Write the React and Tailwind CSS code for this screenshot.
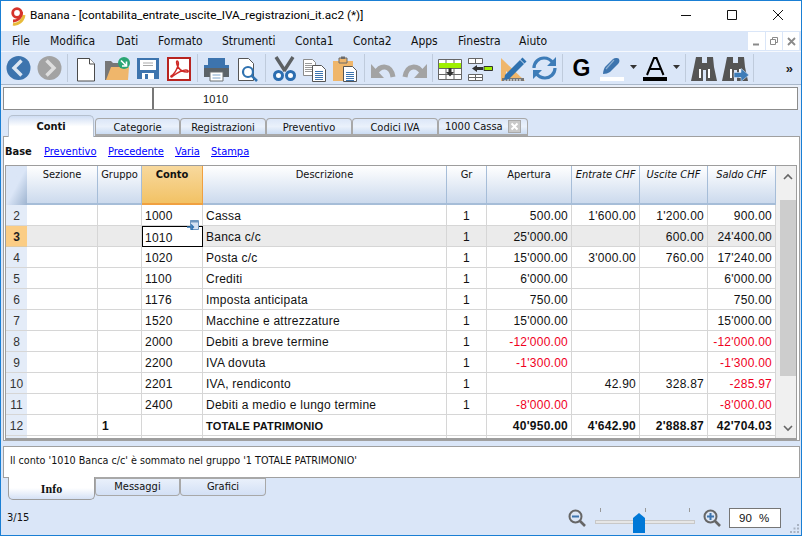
import React from "react";

const ui = "font-['Liberation_Sans',sans-serif]";
const tahoma = "font-['DejaVu_Sans_Condensed','Roboto',sans-serif]";

const Svg = ({ w = 31, h = 28, children }) => (
  <svg width={w} height={h} viewBox={`0 0 ${w} ${h}`} className="block shrink-0">{children}</svg>
);

const Back = () => (
  <Svg><circle cx="15.5" cy="14" r="12" fill="#3d74ae" /><path d="M18.5 6.5 11 14l7.5 7.5" fill="none" stroke="#dce6f2" strokeWidth="3.4" /></Svg>
);
const Fwd = () => (
  <Svg><circle cx="15.5" cy="14" r="12" fill="#a3a3a3" /><path d="M12.5 6.5 20 14l-7.5 7.5" fill="none" stroke="#dedede" strokeWidth="3.4" /></Svg>
);
const NewDoc = () => (
  <Svg><path d="M6.5 4.5h12l5 5.5v17h-17z" fill="#fff" stroke="#4a4a4a" /><path d="M18.5 4.5v5.5h5" fill="#fff" stroke="#4a4a4a" /></Svg>
);
const Open = () => (
  <Svg>
    <path d="M3 26V7h6l2 2h9v6H10L6 26z" fill="#777" />
    <path d="M4 26 9 13h18l-1 13z" fill="#efb66b" />
    <circle cx="22" cy="9" r="6" fill="#2ba574" />
    <path d="M19 6.5 24 11.5M24.5 7.5v4.5h-4.5" stroke="#fff" strokeWidth="1.6" fill="none" />
  </Svg>
);
const Save = () => (
  <Svg>
    <path d="M4 4h22v21H4z" fill="#3d74ae" />
    <path d="M7 6h16v10H7z" fill="#fff" />
    <path d="M10 9h10M10 11.5h10" stroke="#a9a9a9" />
    <path d="M9 19h12v6H9z" fill="#fff" /><path d="M12 20h3v5h-3z" fill="#3d74ae" />
  </Svg>
);
const Pdf = () => (
  <Svg>
    <path d="M4 4h22v22H4z" fill="#fff" stroke="#b82420" strokeWidth="2" />
    <path d="M7 22c3-1 5-5 7-10 1-3 0-5-.8-5-1 0-.8 3 .8 6 2 3 5 5 9 5 2 0 1.600-2-1-2-4 0-9 3-13 6-1.500 1.500-2.500 1-2 0z" fill="none" stroke="#cf2a27" strokeWidth="1.500" />
  </Svg>
);
const PrintI = () => (
  <Svg>
    <path d="M7 4h17v7H7z" fill="#3d74ae" />
    <path d="M3 11h25v12H3z" fill="#5c6368" />
    <path d="M3 11h25v3H3z" fill="#3d74ae" />
    <path d="M9 18h13v9H9z" fill="#fff" stroke="#6b7073" />
    <path d="M11.500 21h8M11.500 24h8" stroke="#7ca4cc" />
  </Svg>
);
const Preview = () => (
  <Svg>
    <path d="M6.500 4.500h10l5 5v17h-15z" fill="#fff" stroke="#555" />
    <circle cx="16" cy="18" r="5" fill="#fff" stroke="#2f72b0" strokeWidth="2.200" />
    <path d="m19.500 21.500 5.500 5.500" stroke="#2f72b0" strokeWidth="2.600" />
  </Svg>
);
const Scissors = () => (
  <Svg>
    <path d="M7 3 16 17M24 3 15 17" stroke="#5d6164" strokeWidth="3.400" />
    <circle cx="9.500" cy="21.500" r="4" fill="#fff" stroke="#2b6db0" strokeWidth="3" />
    <circle cx="21.500" cy="21.500" r="4" fill="#fff" stroke="#2b6db0" strokeWidth="3" />
  </Svg>
);
const Lines = ({ x, y, w, n, c = "#3d74ae", gap = 2 }) => (
  <path d={Array.from({ length: n }, (_, i) => `M${x} ${y + i * gap + 0.5}h${w}`).join("")} stroke={c} />
);
const Copy = () => (
  <Svg>
    <path d="M3.500 5.500h9l3 3v13h-12z" fill="#fff" stroke="#8b8b8b" />
    <Lines x={5} y={9} w={7} n={5} c="#9a9a9a" />
    <path d="M12.500 11.500h9l4 4v12h-13z" fill="#fff" stroke="#555" />
    <Lines x={15} y={17} w={8} n={5} />
  </Svg>
);
const Paste = () => (
  <Svg>
    <path d="M2 7h20v20H2z" fill="#efb66b" />
    <path d="M8 4h8v5H8z" fill="#efb66b" stroke="#6b6b6b" />
    <path d="M10 2.500h4V5h-4z" fill="#6b6b6b" />
    <path d="M12.500 12.500h9l4 4v11h-13z" fill="#fff" stroke="#555" />
    <Lines x={15} y={18} w={8} n={5} />
  </Svg>
);
const UndoShape = () => (
  <>
    <path d="M8 19C12 11 23 10 25 23" fill="none" stroke="#a3a3a3" strokeWidth="5" />
    <path d="M3 10v14h13z" fill="#a3a3a3" />
  </>
);
const Undo = () => <Svg><UndoShape /></Svg>;
const Redo = () => (
  <Svg><g transform="matrix(-1 0 0 1 31 0)"><UndoShape /></g></Svg>
);
const InsRow = () => (
  <Svg>
    <path d="M2.500 5.500h23v20h-23z" fill="#fff" stroke="#666" />
    <path d="M3 9h22v5H3z" fill="#9fef00" />
    <path d="M3 14.500h22M3 20.500h22M10 14v11M18 14v11M10 6v3M18 6v3" stroke="#666" />
    <path d="M12.500 14h3v4h2.500L14 22.500 10 18h2.500z" fill="#333" />
  </Svg>
);
const DelCol = () => (
  <Svg>
    <path d="M1.500 4.500h14v5h-14zM1.500 9.500h14M8.500 4.500v5M1.500 20.500h14v6h-14zM8.500 20.500v6M1.500 23.500h14" fill="#fff" stroke="#666" />
    <path d="M17 12.500h8.500v4H17z" fill="#9fef00" stroke="#333" />
    <path d="M5 14.500 10 11v2h6v3h-6v2z" fill="#333" />
  </Svg>
);
const Ruler = () => (
  <Svg>
    <path d="M3 4v23h24z" fill="#efb66b" />
    <path d="M8 17v5h5z" fill="#dce6f7" />
    <path d="M4 24h22v3H4z" fill="#777" />
    <path d="M7 25v2M10 25v2M13 25v2M16 25v2M19 25v2M22 25v2" stroke="#fff" />
    <path d="m7 21 15-15 4 4-15 15-5 1z" fill="#2f72b0" />
    <path d="m22.500 5.500 2-2 4 4-2 2z" fill="#2f72b0" />
  </Svg>
);
const Refresh = () => (
  <Svg>
    <path d="M5 14c0-6 5-10 10-10 4 0 7 2 9 5M26 14c0 6-5 10-10 10-4 0-7-2-9-5" fill="none" stroke="#3d7cb8" strokeWidth="3.200" />
    <path d="M27 3v9h-9zM4 25v-9h9z" fill="#3d7cb8" />
  </Svg>
);
const Highlighter = () => (
  <Svg>
    <path d="M6 20c0-3 1-5 2-7l8-8c2-1.500 5-1 6 0 1 2 0 4-1 5l-8 8c-2 1-4 2-7 2z" fill="#3d74ae" />
    <path d="M17 6l-8 9" stroke="#8fb0d2" strokeWidth="1.200" />
    <path d="M3 23h24v4H3z" fill="#fff" />
  </Svg>
);
const FontA = () => (
  <Svg>
    <path d="M7 21 14 4h2.500l7 17M9.500 15h11.500" fill="none" stroke="#000" strokeWidth="2" />
    <path d="M3 23h24v4H3z" fill="#000" />
  </Svg>
);
const Binoc = ({ arrow }) => (
  <Svg>
    <path d="M7 3h6v6h5V3h6l1 10 3 14H17V16h-3v11H2l3-14z" fill="#555" />
    <path d="M10 15h2v9h-2zM19 15h2v9h-2z" fill="#fff" />
    {arrow && <path d="M14 18.500h7v-4l8 6.500-8 6.500v-4h-7z" fill="#3d7cb8" stroke="#dae6f8" strokeWidth=".6" />}
  </Svg>
);
const Caret = () => (
  <Svg w={12} h={28}><path d="M2 11h7l-3.500 4z" fill="#333" /></Svg>
);
const Sep = () => <div className="w-px h-[28px] bg-[#bfcbdc] ml-[2px] mr-[3px] shrink-0" />;

const Logo = () => (
  <svg width="18" height="20" viewBox="0 0 18 20" className="block shrink-0">
    <path d="M4 18c5 1 10-3 11-9" fill="none" stroke="#e8bb3a" strokeWidth="3" />
    <circle cx="8" cy="7" r="4.300" fill="none" stroke="#d6322a" strokeWidth="2.800" />
    <path d="M12.500 6C13 11 9 15 4 15" fill="none" stroke="#d6322a" strokeWidth="2.800" />
  </svg>
);

const Magnifier = ({ plus }) => (
  <svg width="18" height="19" viewBox="0 0 18 19" className="block shrink-0">
    <circle cx="7.500" cy="7.500" r="6" fill="#dce6f5" stroke="#666" strokeWidth="2" />
    <path d="m12 12 5 5" stroke="#666" strokeWidth="2.600" />
    <path d={plus ? "M4 7.500h7M7.500 4v7" : "M4 7.500h7"} stroke="#3d74ae" strokeWidth="2" />
  </svg>
);

const menu = [
  ["File", "w-[38px]"], ["Modifica", "w-[66px]"], ["Dati", "w-[42px]"], ["Formato", "w-[64px]"], ["Strumenti", "w-[73px]"],
  ["Conta1", "w-[58px]"], ["Conta2", "w-[58px]"], ["Apps", "w-[47px]"], ["Finestra", "w-[61px]"], ["Aiuto", "w-[40px]"],
];

const topTabs = [
  ["Categorie", "w-[85px]"], ["Registrazioni", "w-[86px]"], ["Preventivo", "w-[86px]"], ["Codici IVA", "w-[86px]"],
];

const cols = [
  { w: "w-[21px]" },
  { w: "w-[71px]", t: "Sezione" },
  { w: "w-[44px]", t: "Gruppo" },
  { w: "w-[61px]", t: "Conto" },
  { w: "w-[244px]", t: "Descrizione" },
  { w: "w-[40px]", t: "Gr" },
  { w: "w-[85px]", t: "Apertura" },
  { w: "w-[68px]", t: "Entrate CHF", i: true },
  { w: "w-[68px]", t: "Uscite CHF", i: true },
  { w: "w-[68px]", t: "Saldo CHF", i: true },
];

const rows = [
  ["2", "", "", "1000", "Cassa", "1", "500.00", "1'600.00", "1'200.00", "900.00"],
  ["3", "", "", "1010", "Banca c/c", "1", "25'000.00", "", "600.00", "24'400.00"],
  ["4", "", "", "1020", "Posta c/c", "1", "15'000.00", "3'000.00", "760.00", "17'240.00"],
  ["5", "", "", "1100", "Crediti", "1", "6'000.00", "", "", "6'000.00"],
  ["6", "", "", "1176", "Imposta anticipata", "1", "750.00", "", "", "750.00"],
  ["7", "", "", "1520", "Macchine e attrezzature", "1", "15'000.00", "", "", "15'000.00"],
  ["8", "", "", "2000", "Debiti a breve termine", "1", "-12'000.00", "", "", "-12'000.00"],
  ["9", "", "", "2200", "IVA dovuta", "1", "-1'300.00", "", "", "-1'300.00"],
  ["10", "", "", "2201", "IVA, rendiconto", "1", "", "42.90", "328.87", "-285.97"],
  ["11", "", "", "2400", "Debiti a medio e lungo termine", "1", "-8'000.00", "", "", "-8'000.00"],
  ["12", "", "1", "", "TOTALE PATRIMONIO", "", "40'950.00", "4'642.90", "2'888.87", "42'704.03"],
];

const align = ["text-center", "text-left", "text-left", "text-left", "text-left", "text-center", "text-right", "text-right", "text-right", "text-right"];

const Row = ({ r, idx }) => {
  const sel = idx === 1;
  const bold = idx === 10;
  return (
    <div className={`flex h-[21px] shrink-0 ${sel ? "bg-[#ebebeb]" : "bg-white"}`}>
      {r.map((v, i) => {
        const red = v.startsWith("-");
        const isCurrent = sel && i === 3;
        const size = bold && i === 4 ? "text-[11px] tracking-[0.15px]" : "text-[12px] tracking-[0.25px]";
        const base = `${cols[i].w} shrink-0 h-[21px] leading-[22px] ${size} whitespace-nowrap px-[3px] border-b border-[#d6d6d6] ${align[i]}`;
        if (i === 0) {
          return (
            <div key={i} className={`${cols[0].w} shrink-0 h-[21px] leading-[22px] text-[12px] text-center border-b ${sel ? "bg-[#fbcd85] border-[#e0c9a0] font-bold text-[#222]" : "bg-[#e4ecf8] border-[#d6d6d6] text-[#333]"}`}>{v}</div>
          );
        }
        return (
          <div
            key={i}
            className={`${base} relative ${isCurrent ? "bg-white border-[1.500px] border-black leading-[20px] pl-[2px]" : "border-r"} ${red ? "text-[#f0001e]" : "text-[#111]"} ${bold ? "font-bold" : ""} ${i === 2 && bold ? "pl-[4px]" : ""}`}
          >
            {v}
            {idx === 0 && i === 3 && (
              <svg width="12" height="11" viewBox="0 0 12 11" className="absolute right-[3px] top-[15px] z-10">
                <path d="M3.500 .5h8v9h-8z" fill="#d5e2f3" stroke="#6e96bf" />
                <path d="M3 1.500h8" stroke="#6e96bf" strokeWidth="2" />
                <path d="M0 7h6M4 4.500 6.500 7 4 9.500M5.500 7v3" stroke="#2f72b0" strokeWidth="1.300" fill="none" />
              </svg>
            )}
          </div>
        );
      })}
    </div>
  );
};

export default function App() {
  return (
    <div className={`relative w-[802px] h-[536px] overflow-hidden flex flex-col bg-[#dae6f8] border border-[#1a7fd4] text-[#111] ${ui}`}>
      {/* Title bar */}
      <div className="h-[30px] shrink-0 bg-white flex items-center pl-[8px]">
        <Logo />
        <span className="ml-[3px] text-[11.800px] font-['Roboto',sans-serif] text-black whitespace-nowrap">Banana - [contabilita_entrate_uscite_IVA_registrazioni_it.ac2 (*)]</span>
        <div className="ml-auto flex items-center h-full">
          <svg width="46" height="30" viewBox="0 0 46 30" className="block"><path d="M18 14.500h10" stroke="#111" /></svg>
          <svg width="46" height="30" viewBox="0 0 46 30" className="block"><path d="M18.500 9.500h9v9h-9z" fill="none" stroke="#111" /></svg>
          <svg width="46" height="30" viewBox="0 0 46 30" className="block"><path d="m18 9 10 10M28 9 18 19" stroke="#111" /></svg>
        </div>
      </div>

      {/* Menu bar */}
      <div className="h-[20px] shrink-0 flex items-center pl-[11px]">
        {menu.map(([m, w], i) => (
          <span key={i} className={`${w} shrink-0 text-[12px] whitespace-nowrap leading-[18px] ${tahoma}`}>{m}</span>
        ))}
        <div className="ml-auto flex h-[18px] gap-[1px] mr-[2px]">
          <div className="w-[17px] bg-white flex items-center justify-center"><svg width="9" height="9"><path d="M1 7.500h6" stroke="#8a8a8a" strokeWidth="2" /></svg></div>
          <div className="w-[16px] bg-white flex items-center justify-center"><svg width="10" height="10"><path d="M1.500 3.500h5v5h-5zM3.500 3V1.500h5v5H7" fill="none" stroke="#8a8a8a" /></svg></div>
          <div className="w-[16px] bg-white flex items-center justify-center"><svg width="9" height="9"><path d="m1 1 7 7M8 1 1 8" stroke="#8a8a8a" strokeWidth="1.800" /></svg></div>
        </div>
      </div>

      {/* Toolbar */}
      <div className="h-[33px] shrink-0 flex items-center pl-[2px] border-t border-[#f5f8fd]">
        <Back /><Fwd /><Sep />
        <NewDoc /><Open /><Save /><Pdf /><Sep />
        <PrintI /><Preview /><Sep />
        <Scissors /><Copy /><Paste /><Sep />
        <Undo /><Redo /><Sep />
        <InsRow /><DelCol /><Ruler /><Refresh /><Sep />
        <span className="w-[31px] text-center text-[23px] font-bold text-black leading-[28px]">G</span>
        <Highlighter /><Caret /><FontA /><Caret /><Sep />
        <Binoc /><Binoc arrow /><Sep />
        <span className="ml-auto mr-[8px] text-[13px] font-bold leading-none text-[#222]">»</span>
      </div>

      {/* Formula bar */}
      <div className="h-[26px] shrink-0 border-t border-[#a9b7c9] bg-[#e9eff9] pt-[2px] px-[2px]">
        <div className="h-[23px] mr-[1px] flex bg-white border border-[#8c8c8c] text-[11px] leading-[22px]">
          <div className="w-[150px] border-r-2 border-[#777]" />
          <span className="ml-[49px] tracking-[0.2px]">1010</span>
        </div>
      </div>

      {/* Tabs */}
      <div className={`h-[21px] shrink-0 mt-[5px] flex items-end pl-[7px] text-[11px] ${tahoma}`}>
        <div className="w-[86px] h-[22px] rounded-t-[5px] border border-b-0 border-[#b5c0cf] bg-gradient-to-b from-[#cfddf3] via-white to-white text-center font-bold leading-[21px] relative top-[1px] z-10">Conti</div>
        {topTabs.map(([t, w], i) => (
          <div key={i} className={`${w} h-[18px] rounded-t-[4px] border border-b-2 border-[#a8a8a8] bg-gradient-to-b from-[#dce7f8] via-[#eaf1fb] to-[#cbdcf3] text-center leading-[17px] ${i === 0 ? "ml-px" : ""}`}>{t}</div>
        ))}
        <div className="w-[90px] h-[18px] rounded-t-[4px] border border-b-2 border-[#a8a8a8] bg-gradient-to-b from-[#dce7f8] via-[#eaf1fb] to-[#cbdcf3] flex items-center pl-[6px] leading-[17px] text-[11px]">
          <span>1000 Cassa</span>
          <span className="ml-[5px] w-[13px] h-[13px] bg-[#c9c9c9] border border-[#aaa] flex items-center justify-center"><svg width="9" height="9"><path d="m1.500 1.500 6 6M7.500 1.500l-6 6" stroke="#fff" strokeWidth="2" /></svg></span>
        </div>
      </div>

      {/* Main panel */}
      <div className="h-[305px] shrink-0 ml-[2px] mr-[1px] bg-white border border-[#a0a0a0] flex flex-col">
        <div className={`h-[28px] shrink-0 flex items-center pl-[1px] pt-[2px] text-[11px] ${tahoma}`}>
          <span className="font-bold w-[39px]">Base</span>
          <span className="text-[#0000ff] underline w-[64px]">Preventivo</span>
          <span className="text-[#0000ff] underline w-[67px]">Precedente</span>
          <span className="text-[#0000ff] underline w-[36px]">Varia</span>
          <span className="text-[#0000ff] underline">Stampa</span>
        </div>
        <div className="h-[275px] shrink-0 ml-[1px] mr-[2px] border border-[#9d9d9d] border-b-2 flex overflow-hidden">
          <div className="w-[770px] shrink-0 flex flex-col overflow-hidden">
            {/* Header */}
            <div className={`flex h-[39px] shrink-0 text-[11px] ${tahoma}`}>
              {cols.map((c, i) => {
                const active = i === 3;
                const cls = i === 0
                  ? "bg-gradient-to-br from-[#dbe6f7] via-[#dbe6f7] to-[#9eb4d0] border-r-0"
                  : active
                  ? "bg-gradient-to-b from-[#f8d99d] to-[#f2c264] border-b-2 border-b-[#f0a040] border-r border-r-[#f0a040] font-bold"
                  : "bg-gradient-to-b from-white to-[#ccdaed] border-b-2 border-b-[#a6bdd8] border-r border-r-[#a6bdd8]";
                return (
                  <div key={i} className={`${c.w} shrink-0 text-center pt-[1px] leading-[16px] whitespace-nowrap ${c.i ? "italic" : ""} ${cls}`}>{c.t}</div>
                );
              })}
            </div>
            {rows.map((r, i) => <Row key={i} r={r} idx={i} />)}
            <div className="flex h-[3px] shrink-0 bg-white">
              {cols.map((c, i) => <div key={i} className={`${c.w} shrink-0 ${i === 0 ? "bg-[#e4ecf8]" : "border-r border-[#d6d6d6]"}`} />)}
            </div>
          </div>
          {/* Scrollbar */}
          <div className="flex-1 bg-[#f0f0f0] flex flex-col pl-[4px]">
            <div className="h-[34px] flex items-start justify-center pt-[7px] shrink-0">
              <svg width="10" height="7"><path d="m1 6 4-4 4 4" fill="none" stroke="#666" strokeWidth="1.600" /></svg>
            </div>
            <div className="h-[176px] bg-[#cdcdcd] shrink-0" />
            <div className="mt-auto h-[13px] flex items-start justify-center shrink-0">
              <svg width="10" height="7"><path d="m1 1 4 4 4-4" fill="none" stroke="#666" strokeWidth="1.600" /></svg>
            </div>
          </div>
        </div>
      </div>

      {/* Info panel */}
      <div className={`h-[32px] shrink-0 mt-[5px] ml-[2px] mr-[1px] bg-white border border-[#a0a0a0] pl-[6px] text-[10.700px] leading-[27px] ${tahoma}`}>
        Il conto '1010 Banca c/c' è sommato nel gruppo '1 TOTALE PATRIMONIO'
      </div>

      {/* Bottom tabs */}
      <div className={`h-[22px] shrink-0 flex items-start pl-[7px] text-[11px] relative -mt-[1px] ${tahoma}`}>
        <div className="w-[87px] h-[23px] rounded-b-[5px] border border-t-0 border-[#9d9d9d] bg-gradient-to-t from-[#d5e1f5] via-white to-white text-center font-bold leading-[24px] font-['Liberation_Serif',serif] text-[12px] relative z-10">Info</div>
        <div className="w-[85px] h-[19px] rounded-b-[4px] border border-t-2 border-[#a8a8a8] bg-gradient-to-b from-[#e9f0fb] to-[#d3e0f5] text-center leading-[15px]">Messaggi</div>
        <div className="w-[86px] h-[19px] rounded-b-[4px] border border-t-2 border-[#a8a8a8] bg-gradient-to-b from-[#e9f0fb] to-[#d3e0f5] text-center leading-[15px]">Grafici</div>
      </div>

      {/* Status bar */}
      <div className="flex-1 flex items-start relative pl-[6px] pt-[9px]">
        <span className={`text-[11px] leading-[20px] ${tahoma}`}>3/15</span>
        <div className="ml-auto flex items-start pr-[20px]">
          <div className="mt-[1px]"><Magnifier /></div>
          <div className="relative w-[100px] h-[26px] ml-[9px]">
            <div className="absolute left-[5px] top-0 w-px h-[4px] bg-[#999]" />
            <div className="absolute left-[50px] top-0 w-px h-[4px] bg-[#999]" />
            <div className="absolute left-[94px] top-0 w-px h-[4px] bg-[#999]" />
            <div className="absolute left-0 top-[12px] w-full h-[4px] bg-[#e6e6e6] border border-[#c8c8c8]" />
            <svg width="12" height="20" viewBox="0 0 12 20" className="absolute left-[38px] top-[5px]"><path d="M0 5 6 0l6 5v15H0z" fill="#0078d7" /></svg>
          </div>
          <div className="ml-[8px] mt-[1px]"><Magnifier plus /></div>
          <div className="ml-[8px] w-[52px] h-[20px] bg-white border border-[#767676] text-[11.500px] leading-[18px] pl-[9px] whitespace-pre tracking-[0.2px]">90  %</div>
        </div>
        <svg width="11" height="11" viewBox="0 0 11 11" className="absolute right-[1px] bottom-[1px]">
          <path d="M8 1h2v2H8zM4.500 4.500h2v2h-2zM8 4.500h2v2H8zM1 8h2v2H1zM4.500 8h2v2h-2zM8 8h2v2H8z" fill="#a9b3c2" />
        </svg>
      </div>
    </div>
  );
}
